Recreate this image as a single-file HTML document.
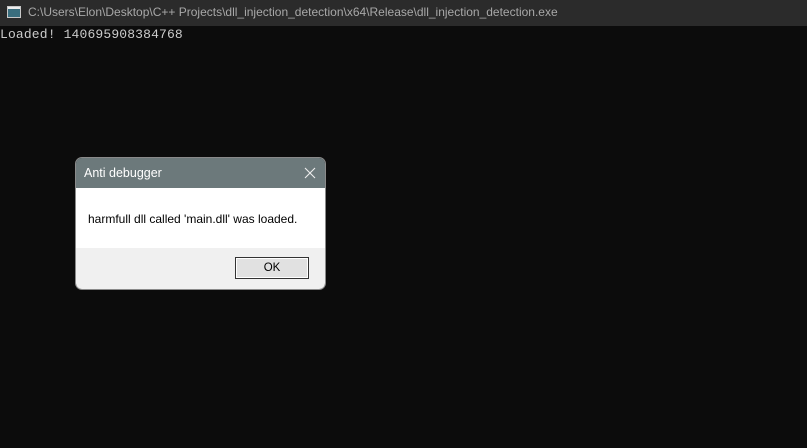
<!DOCTYPE html>
<html><head><style>
body{margin:0;width:807px;height:448px;background:#0c0c0c;overflow:hidden;position:relative;font-family:"Liberation Sans",sans-serif}
.tb{position:absolute;left:0;top:0;width:807px;height:26px;background:#2b2b2b}
.ic{position:absolute;left:7px;top:6px;width:12px;height:10px;border:1px solid #c8c8c8;background:#3a6e7e}
.ic:after{content:"";position:absolute;left:0;top:0;width:12px;height:2px;background:#eee}
.tt{position:absolute;left:28px;top:5px;font-size:12px;color:#a8a8a8;white-space:nowrap}
.con{position:absolute;left:0;top:27px;font-family:"Liberation Mono",monospace;font-size:13px;color:#cccccc;letter-spacing:0.15px}
.dlg{position:absolute;left:75px;top:157px;width:251px;height:133px;border-radius:7px;overflow:hidden;border:1px solid #8a8a8a;box-sizing:border-box}
.dt{height:30px;background:#6c797b;color:#fff;font-size:12.5px;line-height:31px;padding-left:8px;position:relative}
.x{position:absolute;right:9px;top:9px}
.db{height:60px;background:#fff;font-size:12px;color:#000;padding-left:12px;line-height:63px}
.df{height:42px;background:#f0f0f0;position:relative}
.ok{position:absolute;left:159px;top:9px;width:74px;height:22px;box-sizing:border-box;border:1px solid #333;background:#e1e1e1;font-size:11.5px;text-align:center;line-height:20px;box-shadow:inset 0 0 0 1px #fff}
</style></head><body>
<div class="tb"><div class="ic"></div><div class="tt">C:\Users\Elon\Desktop\C++ Projects\dll_injection_detection\x64\Release\dll_injection_detection.exe</div></div>
<div class="con">Loaded! 140695908384768</div>
<div class="dlg">
<div class="dt">Anti debugger<svg class="x" width="12" height="12" viewBox="0 0 12 12"><path d="M1 1L11 11M11 1L1 11" stroke="#eee" stroke-width="1.1"/></svg></div>
<div class="db">harmfull dll called 'main.dll' was loaded.</div>
<div class="df"><div class="ok">OK</div></div>
</div>
</body></html>
